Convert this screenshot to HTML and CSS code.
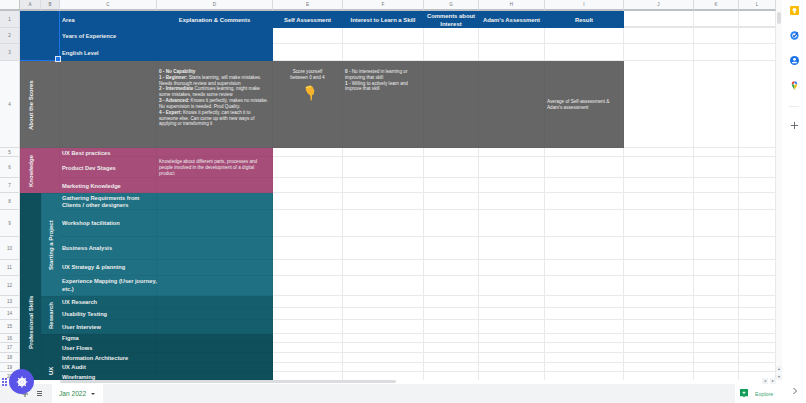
FILE: index.html
```html
<!DOCTYPE html>
<html lang="en">
<head>
    <meta charset="UTF-8">
    <title>Skills Matrix</title>
    <link rel="stylesheet" href="styles.css">
</head>
<body>
    <div class="main">
        <div class="sheet">
            <div class="clip">
                <div class="grid">
                    <!-- column letters -->
                    <div class="corner"></div>
                    <div class="ch sel">A</div><div class="ch sel">B</div><div class="ch">C</div><div class="ch">D</div><div class="ch">E</div><div class="ch">F</div><div class="ch">G</div><div class="ch">H</div><div class="ch">I</div><div class="ch">J</div><div class="ch">K</div><div class="ch">L</div>

                    <!-- row 1 -->
                    <div class="rh sel">1</div>
                    <div class="blue merged-top"></div>
                    <div class="blue area">Area</div>
                    <div class="blue head">Explanation &amp; Comments</div>
                    <div class="blue head">Self Assessment</div>
                    <div class="blue head">Interest to Learn a Skill</div>
                    <div class="blue head">Comments about Interest</div>
                    <div class="blue head">Adam's Assessment</div>
                    <div class="blue head">Result</div>
                    <div class="frozen"></div><div class="frozen"></div><div class="frozen"></div>

                    <!-- rows 2, 3 -->
                    <div class="rh sel">2</div>
                    <div class="blue area">Years of Experience</div>
                    <div class="blue"></div><div></div><div></div><div></div><div></div><div></div><div></div><div></div><div></div>
                    <div class="rh sel">3</div>
                    <div class="blue area">English Level</div>
                    <div class="blue"></div><div></div><div></div><div></div><div></div><div></div><div></div><div></div><div></div>

                    <!-- row 4 -->
                    <div class="rh">4</div>
                    <div class="grey side">About the Scores</div>
                    <div class="grey"></div>
                    <div class="grey"></div>
                    <div class="grey note top">
                        <b>0 - No Capability</b><br>
                        <b>1 - Beginner:</b> Starts learning, will make mistakes.<br>Needs thorough review and supervision<br>
                        <b>2 - Intermediate</b> Continues learning, might make<br>some mistakes, needs some review<br>
                        <b>3 - Advanced:</b> Knows it perfectly, makes no mistake.<br>No supervision is needed. Prod Quality.<br>
                        <b>4 - Expert:</b> Knows it perfectly, can teach it to<br>someone else. Can come up with new ways of<br>applying or transforming it
                    </div>
                    <div class="grey note top score">
                        Score yourself<br>between 0 and 4
                        <svg class="hand" viewBox="0 0 10 16">
                            <path d="M.6 2 L5.6 .4 L7.8 2 L9.4 6 L8.6 9.4 L7.2 10 L6.8 15.5 L5.8 15.5 L5.2 10.5 L2.8 8.4 L1 5.6 Z" fill="#f6b42c"/>
                            <path d="M.6 2 L5.6 .4 L6.2 2 L1.6 3.4 Z" fill="#fbd04c"/>
                        </svg>
                    </div>
                    <div class="grey note top">
                        <b>0</b> - No interested in learning or<br>improving that skill<br>
                        <b>1</b> - Willing to actively learn and<br>improve that skill
                    </div>
                    <div class="grey"></div>
                    <div class="grey"></div>
                    <div class="grey note">Average of Self-assessment &amp; Adam's assessment</div>
                    <div></div><div></div><div></div>

                    <!-- rows 5-7 -->
                    <div class="rh">5</div>
                    <div class="pink side span3">Knowledge</div>
                    <div class="pink span3"></div>
                    <div class="pink area">UX Best practices</div>
                    <div class="pink"></div><div></div><div></div><div></div><div></div><div></div><div></div><div></div><div></div>
                    <div class="rh">6</div>
                    <div class="pink area">Product Dev Stages</div>
                    <div class="pink note">Knowledge about different parts, processes and people involved in the development of a digital product</div>
                    <div></div><div></div><div></div><div></div><div></div><div></div><div></div><div></div>
                    <div class="rh">7</div>
                    <div class="pink area">Marketing Knowledge</div>
                    <div class="pink"></div><div></div><div></div><div></div><div></div><div></div><div></div><div></div><div></div>

                    <!-- rows 8-12 -->
                    <div class="rh">8</div>
                    <div class="teal-dark side span13 pro">Professional Skills</div>
                    <div class="teal side span5">Starting a Project</div>
                    <div class="teal area"><span>Gathering Requirments from<br>Clients / other designers</span></div>
                    <div class="teal"></div><div></div><div></div><div></div><div></div><div></div><div></div><div></div><div></div>
                    <div class="rh">9</div>
                    <div class="teal area">Workshop facilitation</div>
                    <div class="teal"></div><div></div><div></div><div></div><div></div><div></div><div></div><div></div><div></div>
                    <div class="rh">10</div>
                    <div class="teal area">Business Analysis</div>
                    <div class="teal"></div><div></div><div></div><div></div><div></div><div></div><div></div><div></div><div></div>
                    <div class="rh">11</div>
                    <div class="teal area raised">UX Strategy &amp; planning</div>
                    <div class="teal"></div><div></div><div></div><div></div><div></div><div></div><div></div><div></div><div></div>
                    <div class="rh">12</div>
                    <div class="teal area raised"><span>Experience Mapping (User journey,<br>etc.)</span></div>
                    <div class="teal"></div><div></div><div></div><div></div><div></div><div></div><div></div><div></div><div></div>

                    <!-- rows 13-15 -->
                    <div class="rh">13</div>
                    <div class="teal-mid side span3">Research</div>
                    <div class="teal-mid area">UX Research</div>
                    <div class="teal-mid"></div><div></div><div></div><div></div><div></div><div></div><div></div><div></div><div></div>
                    <div class="rh">14</div>
                    <div class="teal-mid area">Usability Testing</div>
                    <div class="teal-mid"></div><div></div><div></div><div></div><div></div><div></div><div></div><div></div><div></div>
                    <div class="rh">15</div>
                    <div class="teal-mid area">User Interview</div>
                    <div class="teal-mid"></div><div></div><div></div><div></div><div></div><div></div><div></div><div></div><div></div>

                    <!-- rows 16-20 -->
                    <div class="rh">16</div>
                    <div class="teal-dark side span5 ux">UX</div>
                    <div class="teal-dark area">Figma</div>
                    <div class="teal-dark"></div><div></div><div></div><div></div><div></div><div></div><div></div><div></div><div></div>
                    <div class="rh">17</div>
                    <div class="teal-dark area">User Flows</div>
                    <div class="teal-dark"></div><div></div><div></div><div></div><div></div><div></div><div></div><div></div><div></div>
                    <div class="rh">18</div>
                    <div class="teal-dark area">Information Architecture</div>
                    <div class="teal-dark"></div><div></div><div></div><div></div><div></div><div></div><div></div><div></div><div></div>
                    <div class="rh">19</div>
                    <div class="teal-dark area">UX Audit</div>
                    <div class="teal-dark"></div><div></div><div></div><div></div><div></div><div></div><div></div><div></div><div></div>
                    <div class="rh">20</div>
                    <div class="teal-dark area">Wireframing</div>
                    <div class="teal-dark"></div><div></div><div></div><div></div><div></div><div></div><div></div><div></div><div></div>
                </div>
            </div>
            <div class="hscroll">
                <div class="hthumb"></div>
                <div class="harrows"><span>&#9666;</span><span>&#9656;</span></div>
            </div>
        </div>

        <div class="vscroll">
            <div class="vthumb"></div>
            <div class="varrows"><span>&#9652;</span><span>&#9662;</span></div>
        </div>

        <div class="sidebar">
            <svg class="side-icon" viewBox="0 0 10 10">
                <rect width="10" height="10" rx="1.2" fill="#fbbc04"/>
                <circle cx="5" cy="4.3" r="2.2" fill="#fff"/>
                <rect x="4" y="6" width="2" height="2" fill="#fff"/>
            </svg>
            <svg class="side-icon" viewBox="0 0 10 10">
                <circle cx="5" cy="5" r="4.6" fill="#2684fc"/>
                <circle cx="5" cy="5" r="2.6" fill="#fff"/>
                <path d="M3.4 5 L4.7 6.3 L8.6 1.6" fill="none" stroke="#1a56c4" stroke-width="1.3"/>
            </svg>
            <svg class="side-icon" viewBox="0 0 10 10">
                <circle cx="5" cy="5" r="5" fill="#1a73e8"/>
                <circle cx="5" cy="3.7" r="1.6" fill="#fff"/>
                <path d="M2 8 C2.4 5.8 7.6 5.8 8 8 Z" fill="#fff"/>
            </svg>
            <svg class="side-icon" viewBox="0 0 10 10">
                <path d="M5 10 C4.4 8 2 6.4 2 3.6 L5 3.6 Z" fill="#34a853"/>
                <path d="M5 10 C5.6 8 8 6.4 8 3.6 L5 3.6 Z" fill="#fbbc04"/>
                <path d="M2 3.6 A3 3 0 0 1 5 .4 L5 3.6 Z" fill="#ea4335"/>
                <path d="M8 3.6 A3 3 0 0 0 5 .4 L5 3.6 Z" fill="#4285f4"/>
                <circle cx="5" cy="3.6" r="1.1" fill="#fff"/>
            </svg>
            <div class="side-rule"></div>
            <svg class="side-icon plus" viewBox="0 0 10 10">
                <path d="M5 1 V9 M1 5 H9" stroke="#5f6368" stroke-width="1"/>
            </svg>
        </div>
    </div>

    <div class="tabs">
        <svg class="tab-add" viewBox="0 0 6 6">
            <path d="M3 0 V6 M0 3 H6" stroke="#5f6368" stroke-width="1"/>
        </svg>
        <div class="tab-menu"><span></span><span></span><span></span></div>
        <div class="tab">Jan 2022 <i class="caret"></i></div>
        <div class="explore">
            <svg class="explore-icon" viewBox="0 0 10 11">
                <path d="M0 0 H10 V9 H6.2 L5 10.6 L3.8 9 H0 Z" fill="#0f9d58"/>
                <path d="M5 2 L5.7 3.8 L7.6 4.5 L5.7 5.2 L5 7 L4.3 5.2 L2.4 4.5 L4.3 3.8 Z" fill="#fff"/>
            </svg>
            <span>Explore</span>
        </div>
        <div class="tabs-end">
            <svg class="chevron" viewBox="0 0 6 8">
                <path d="M1.5 1 L4.5 4 L1.5 7" fill="none" stroke="#5f6368" stroke-width="1"/>
            </svg>
        </div>
    </div>

    <!-- extension button floating over the sheet -->
    <div class="dots"><span></span><span></span><span></span><span></span><span></span><span></span></div>
    <div class="fab">
        <svg viewBox="0 0 12 12">
            <circle cx="6" cy="6" r="3.2" fill="none" stroke="#fff" stroke-width="1.8"/>
            <path d="M6 .6 V11.4 M.6 6 H11.4 M2.2 2.2 L9.8 9.8 M9.8 2.2 L2.2 9.8" stroke="#fff" stroke-width="1.2"/>
            <circle cx="6" cy="6" r="1" fill="#fff"/>
        </svg>
    </div>
</body>
</html>
```

FILE: styles.css
```css
* {
    margin: 0;
    padding: 0;
    box-sizing: border-box;
}

body {
    width: 806px;
    height: 403px;
    overflow: hidden;
    background: #fff;
    font-family: "Liberation Sans", Arial, sans-serif;
    position: relative;
}

.main {
    display: flex;
    height: 384px;
}

.sheet {
    width: 776px;
    display: flex;
    flex-direction: column;
}

.clip {
    height: 380px;
    overflow: hidden;
}

.grid {
    display: grid;
    grid-template-columns: 20px 21px 19px 97px 116px 70px 81px 55px 66px 79px 70px 45px 37px;
    grid-template-rows: 11px 17px 16px 17px 87px 9px 21px 15px 17px 27px 23px 16px 20px 12px 12px 14px 9px 10px 10px 9px 10px;
}

/* plain cell */
.grid > div {
    min-width: 0;
    min-height: 0;
    border-right: 1px solid #e8e9ea;
    border-bottom: 1px solid #e8e9ea;
}

.grid > .corner {
    background: #f8f9fa;
    border-right: 1px solid #c4c7c5;
    border-bottom: 2px solid #bdc1c6;
}

.grid > .ch {
    background: #f8f9fa;
    color: #70757a;
    font-size: 4.6px;
    display: flex;
    align-items: center;
    justify-content: center;
    border-right: 1px solid #dadce0;
    border-bottom: 2px solid #bdc1c6;
}

.grid > .rh {
    background: #f8f9fa;
    color: #70757a;
    font-size: 4.6px;
    display: flex;
    align-items: center;
    justify-content: center;
    border-right: 1px solid #dadce0;
    border-bottom: 1px solid #dadce0;
}

.grid > .sel {
    background: #e8eaed;
}

.grid > .frozen {
    border-bottom: 2px solid #e4e5e6;
}

/* colours */
.grid > .blue {
    background: #0b5394;
    border-color: #0b5394;
}

.grid > .grey {
    background: #666;
    border-color: #626262;
}

.grid > .pink {
    background: #a64d79;
    border-color: #a04a75;
}

.grid > .teal {
    background: #1e7082;
    border-color: #1c6a7b;
}

.grid > .teal-mid {
    background: #155e6d;
    border-color: #145a68;
}

.grid > .teal-dark {
    background: #0f4e5b;
    border-color: #0e4b57;
}

/* selected block A1:B3 */
.grid > .merged-top {
    grid-column: span 2;
    grid-row: span 3;
    border-right: 1px solid #1a73e8;
    border-bottom: 1px solid #1a73e8;
    position: relative;
}

.merged-top::after {
    content: "";
    position: absolute;
    right: -2px;
    bottom: -2px;
    width: 4px;
    height: 4px;
    background: #1a73e8;
    border: 1px solid #dfe8f5;
}

.span3 {
    grid-row: span 3;
}

.span5 {
    grid-row: span 5;
}

.span13 {
    grid-row: span 13;
}

/* text cells */
.area {
    color: #eee;
    font-size: 5.7px;
    font-weight: bold;
    line-height: 7.4px;
    padding: 2px 0 0 2px;
    white-space: nowrap;
    display: flex;
    align-items: center;
}

.blue.area,
.pink.area {
    padding-top: 3px;
}

.teal.raised {
    padding-top: 0;
}

.head {
    color: #f3f3f3;
    font-size: 5.9px;
    font-weight: bold;
    line-height: 7.2px;
    padding-top: 3px;
    text-align: center;
    display: flex;
    align-items: center;
    justify-content: center;
}

.note {
    color: #eee;
    font-size: 4.65px;
    line-height: 5.83px;
    padding: 2px 2px 0;
    display: flex;
    flex-direction: column;
    justify-content: center;
}

.note.top {
    display: block;
    padding-top: 8px;
    white-space: nowrap;
}

.score {
    text-align: center;
}

.hand {
    display: block;
    width: 10px;
    height: 16px;
    margin: 4px auto 0 30px;
}

.side {
    color: #f3f3f3;
    font-size: 6px;
    font-weight: bold;
    writing-mode: vertical-rl;
    transform: rotate(180deg);
    text-align: center;
    display: flex;
    align-items: center;
    justify-content: center;
}

.grid > .pro {
    justify-content: flex-start;
    padding-top: 33px;
}

.grid > .ux {
    justify-content: flex-start;
    padding-top: 7px;
}

/* scrollbars */
.hscroll {
    height: 4px;
    display: flex;
    justify-content: space-between;
    padding-left: 60px;
    background: #fff;
}

.hthumb {
    width: 336px;
    height: 3px;
    background: #dadce0;
    border-radius: 2px;
}

.harrows {
    display: flex;
    gap: 2px;
    margin-top: -2px;
    color: #80868b;
    font-size: 4px;
    line-height: 5px;
}

.harrows span,
.varrows span {
    display: block;
    width: 6px;
    text-align: center;
    background: #f1f3f4;
}

.vscroll {
    width: 6px;
    height: 380px;
    background: #fafafa;
    padding-top: 12px;
    display: flex;
    flex-direction: column;
    justify-content: space-between;
    align-items: center;
}

.vthumb {
    width: 4px;
    height: 12px;
    background: #dadce0;
    border-radius: 2px;
}

.varrows {
    display: flex;
    flex-direction: column;
    gap: 2px;
    color: #80868b;
    font-size: 4px;
    line-height: 6px;
}

.sidebar {
    width: 24px;
    display: flex;
    flex-direction: column;
    align-items: center;
    padding: 5.5px 1px 0 0;
    margin-left: 1px;
    gap: 16px;
}

.side-icon {
    width: 9px;
    height: 9px;
    display: block;
}

.side-rule {
    width: 10px;
    height: 1px;
    background: #e8eaed;
}

.side-icon.plus {
    margin-top: -2px;
}

/* sheet tabs */
.tabs {
    height: 19px;
    background: #f1f3f4;
    display: flex;
    align-items: center;
    padding-left: 22px;
}

.tab-add {
    width: 6px;
    height: 6px;
    margin-right: 9px;
}

.tab-menu {
    width: 5px;
    display: flex;
    flex-direction: column;
    gap: 1px;
}

.tab-menu span {
    height: 1px;
    background: #5f6368;
}

.tab {
    margin-left: 10px;
    width: 51px;
    height: 19px;
    background: #fff;
    color: #2c8a4e;
    font-size: 6.6px;
    display: flex;
    align-items: center;
    padding-left: 7px;
    gap: 5px;
}

.caret {
    width: 0;
    height: 0;
    border-left: 2px solid transparent;
    border-right: 2px solid transparent;
    border-top: 2px solid #444;
}

.explore {
    margin-left: auto;
    width: 47px;
    height: 19px;
    background: #fff;
    color: #3ba573;
    font-size: 5.4px;
    display: flex;
    align-items: center;
    padding-left: 5px;
    gap: 7px;
}

.explore-icon {
    width: 8px;
    height: 9px;
}

.tabs-end {
    width: 24px;
    height: 19px;
    padding: 0 0 6px 1px;
    background: #fff;
    display: flex;
    align-items: center;
    justify-content: center;
}

.chevron {
    width: 6px;
    height: 8px;
}

/* floating button */
.fab {
    position: absolute;
    left: 9px;
    top: 369px;
    width: 25px;
    height: 25px;
    border-radius: 50%;
    background: #5b54e8;
    display: flex;
    align-items: center;
    justify-content: center;
}

.fab svg {
    width: 12px;
    height: 12px;
}

.dots {
    position: absolute;
    left: 2px;
    top: 378px;
    width: 6px;
    display: grid;
    grid-template-columns: 2px 2px;
    gap: 1px 1px;
}

.dots span {
    height: 2px;
    background: #6f6ae6;
}
```
